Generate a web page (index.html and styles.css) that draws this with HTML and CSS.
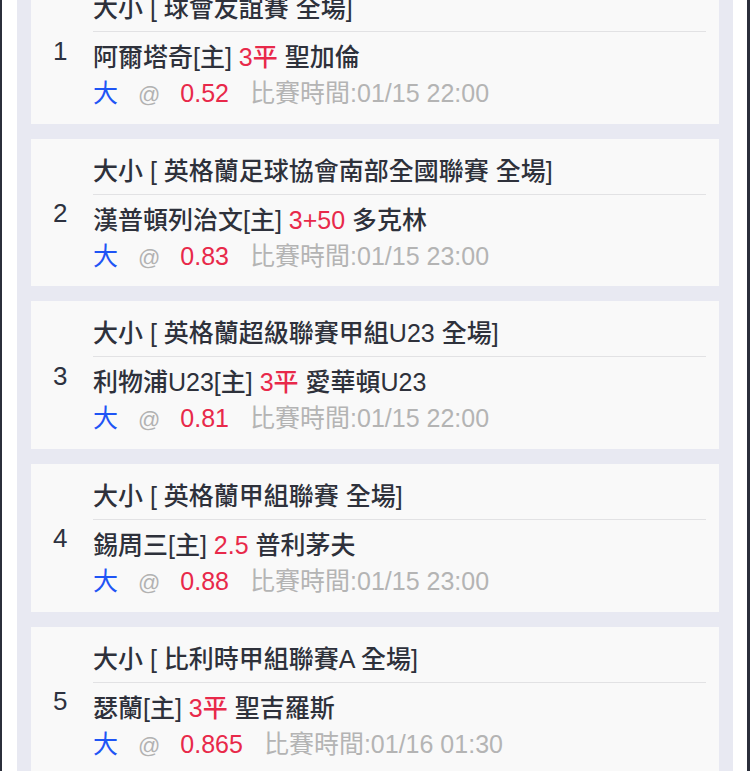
FILE: index.html
```html
<!DOCTYPE html>
<html lang="zh-Hant">
<head>
<meta charset="utf-8">
<link rel="stylesheet" href="styles.css">
</head>
<body>
<div class="frame">
  <div class="panel">
    <div class="list">
      <div class="card">
        <div class="num">1</div>
        <div class="body">
          <div class="title">大小 [ 球會友誼賽 全場]</div>
          <div class="teams">阿爾塔奇[主] <span class="red">3平</span> 聖加倫</div>
          <div class="bet"><span class="blue">大</span><span class="at">@</span><span class="red">0.52</span><span class="time">比賽時間:01/15 22:00</span></div>
        </div>
      </div>
      <div class="card">
        <div class="num">2</div>
        <div class="body">
          <div class="title">大小 [ 英格蘭足球協會南部全國聯賽 全場]</div>
          <div class="teams">漢普頓列治文[主] <span class="red">3+50</span> 多克林</div>
          <div class="bet"><span class="blue">大</span><span class="at">@</span><span class="red">0.83</span><span class="time">比賽時間:01/15 23:00</span></div>
        </div>
      </div>
      <div class="card">
        <div class="num">3</div>
        <div class="body">
          <div class="title">大小 [ 英格蘭超級聯賽甲組U23 全場]</div>
          <div class="teams">利物浦U23[主] <span class="red">3平</span> 愛華頓U23</div>
          <div class="bet"><span class="blue">大</span><span class="at">@</span><span class="red">0.81</span><span class="time">比賽時間:01/15 22:00</span></div>
        </div>
      </div>
      <div class="card">
        <div class="num">4</div>
        <div class="body">
          <div class="title">大小 [ 英格蘭甲組聯賽 全場]</div>
          <div class="teams">錫周三[主] <span class="red">2.5</span> 普利茅夫</div>
          <div class="bet"><span class="blue">大</span><span class="at">@</span><span class="red">0.88</span><span class="time">比賽時間:01/15 23:00</span></div>
        </div>
      </div>
      <div class="card">
        <div class="num">5</div>
        <div class="body">
          <div class="title">大小 [ 比利時甲組聯賽A 全場]</div>
          <div class="teams">瑟蘭[主] <span class="red">3平</span> 聖吉羅斯</div>
          <div class="bet"><span class="blue">大</span><span class="at">@</span><span class="red">0.865</span><span class="time">比賽時間:01/16 01:30</span></div>
        </div>
      </div>
    </div>
  </div>
</div>
</body>
</html>
```
FILE: styles.css
```css
html, body {
  margin: 0;
  padding: 0;
  height: 100%;
  overflow: hidden;
  background: #ffffff;
}
body {
  font-family: "Liberation Sans", "Noto Sans CJK TC", sans-serif;
  color: #2e313b;
}
.frame {
  height: 100%;
  border-left: 2px solid #2b2f3b;
  border-right: 3px solid #2b2f3b;
  padding: 0 14px 0 15px;
  background: #ffffff;
  box-sizing: border-box;
}
.panel {
  background: #e8e9f2;
  height: 100%;
  overflow: hidden;
}
.list {
  margin-top: -39px;
  padding: 15px 14px;
  display: flex;
  flex-direction: column;
  gap: 15px;
}
.card {
  background: #f9f9f9;
  display: flex;
  align-items: center;
  padding: 14px 13px 12.67px 22px;
}
.num {
  width: 40px;
  flex: none;
  font-size: 26px;
  line-height: 36px;
  height: 36px;
  color: #2d3240;
  font-weight: 500;
}
.body {
  flex: 1;
  font-size: 25px;
  line-height: 36px;
  font-weight: 500;
}
.title, .teams, .bet {
  height: 36px;
  white-space: nowrap;
}
.title {
  padding-bottom: 5px;
  border-bottom: 1px solid #e2e2e4;
  margin-bottom: 7px;
}
.bet {
  font-weight: 400;
}
.red { color: #e8294a; }
.blue { color: #1f55f5; margin-right: 20px; }
.at { color: #b2b2b2; margin-right: 20px; font-size: 22px; }
.bet .red { margin-right: 21px; }
.time { color: #b4b4b4; }
```
